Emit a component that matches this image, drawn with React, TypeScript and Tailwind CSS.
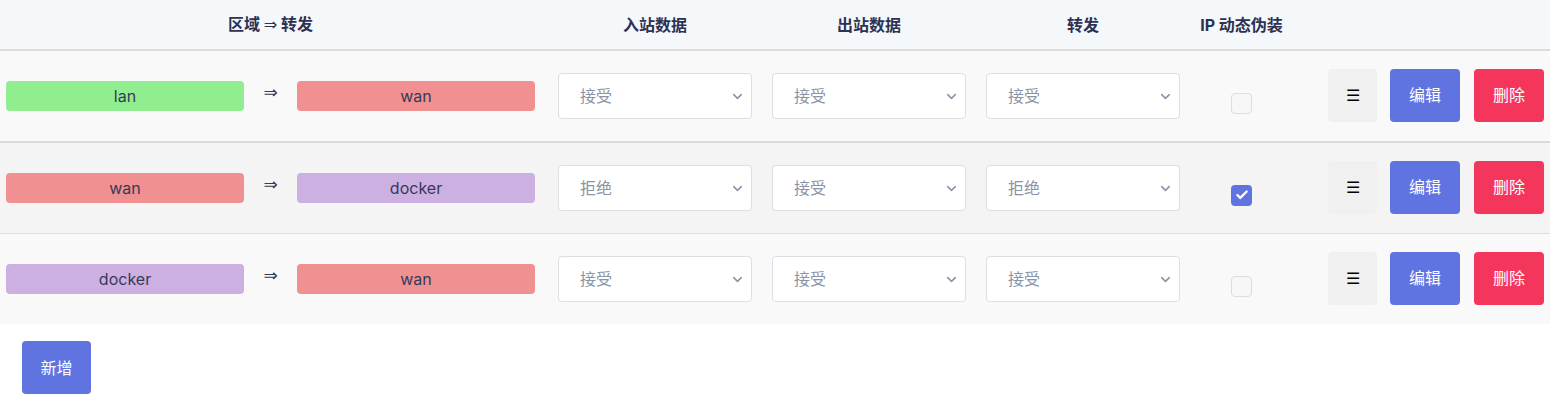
import { ChevronDown, Check } from "lucide-react";

type Rule = {
  from: string;
  to: string;
  input: string;
  output: string;
  forward: string;
  masq: boolean;
};

const zoneColor: Record<string, string> = {
  lan: "bg-[#90ee90]",
  wan: "bg-[#f09090]",
  docker: "bg-[#cdb0e2]",
};

const rules: Rule[] = [
  { from: "lan", to: "wan", input: "接受", output: "接受", forward: "接受", masq: false },
  { from: "wan", to: "docker", input: "拒绝", output: "接受", forward: "拒绝", masq: true },
  { from: "docker", to: "wan", input: "接受", output: "接受", forward: "接受", masq: false },
];

const font = "font-['Inter','Noto_Sans_CJK_SC',sans-serif]";

const Zone = ({ name }: { name: string }) => (
  <div
    className={`flex h-[30px] w-[238px] items-center justify-center rounded-[4px] text-[16px] text-[#363a59] ${zoneColor[name]}`}
  >
    {name}
  </div>
);

const Select = ({ value }: { value: string }) => (
  <div className="flex h-[46px] w-[194px] items-center justify-between rounded-[4px] border border-[#dcdfe6] bg-white pl-[21px] pr-[6px] text-[16px] text-[#8a94a6]">
    <span>{value}</span>
    <ChevronDown size={15} strokeWidth={2.5} className="text-[#8a94a6]" />
  </div>
);

const Row = ({ rule, cls }: { rule: Rule; cls: string }) => (
  <div className={`flex items-center ${cls}`}>
    <div className="flex w-[250px] pl-[6px]">
      <Zone name={rule.from} />
    </div>
    <div className="flex w-[41px] -translate-y-[3px] justify-center font-['DejaVu_Sans',sans-serif] text-[17px] text-[#363a59]">
      ⇒
    </div>
    <div className="flex w-[257px] pl-[6px]">
      <Zone name={rule.to} />
    </div>
    <div className="flex w-[214px] pl-[10px]">
      <Select value={rule.input} />
    </div>
    <div className="flex w-[214px] pl-[10px]">
      <Select value={rule.output} />
    </div>
    <div className="flex w-[214px] pl-[10px]">
      <Select value={rule.forward} />
    </div>
    <div className="flex w-[103px] translate-y-[7px] justify-center">
      {rule.masq ? (
        <div className="flex h-[21px] w-[21px] items-center justify-center rounded-[4px] bg-[#6074e1]">
          <Check size={14} strokeWidth={4} className="text-white" />
        </div>
      ) : (
        <div className="h-[21px] w-[21px] rounded-[4px] border border-[#dddddd] bg-[#f7f7f7]" />
      )}
    </div>
    <div className="flex flex-1 -translate-y-[1px] justify-end pr-[6px]">
      <button className="flex h-[53px] w-[49px] items-center justify-center rounded-[4px] bg-[#f0f0f0] text-[16px] text-black">
        ☰
      </button>
      <button className="ml-[13px] h-[53px] w-[70px] rounded-[4px] bg-[#6074e1] text-[16px] text-white">
        编辑
      </button>
      <button className="ml-[14px] h-[53px] w-[70px] rounded-[4px] bg-[#f5365c] text-[16px] text-white">
        删除
      </button>
    </div>
  </div>
);

export default function App() {
  return (
    <div className={`w-[1550px] bg-white ${font}`}>
      <div className="flex h-[51px] items-center border-b-2 border-[#dcdcdc] bg-[#f5f8fb] text-[16px] font-bold text-[#2e3150]">
        <div className="w-[541px] text-center">
          区域 <span className="font-['DejaVu_Sans',sans-serif] font-normal">⇒</span> 转发
        </div>
        <div className="w-[7px]" />
        <div className="w-[214px] text-center">入站数据</div>
        <div className="w-[214px] text-center">出站数据</div>
        <div className="w-[214px] text-center">转发</div>
        <div className="w-[103px] text-center">IP 动态伪装</div>
      </div>
      <Row rule={rules[0]} cls="h-[92px] bg-[#f9f9f9] border-b-2 border-[#dadada]" />
      <Row rule={rules[1]} cls="h-[91px] bg-[#f4f4f4] border-b border-[#dedede]" />
      <Row rule={rules[2]} cls="h-[90px] bg-[#f9f9f9]" />
      <div className="pl-[22px] pt-[17px]">
        <button className="h-[53px] w-[69px] rounded-[4px] bg-[#6074e1] text-[16px] text-white">新增</button>
      </div>
    </div>
  );
}
